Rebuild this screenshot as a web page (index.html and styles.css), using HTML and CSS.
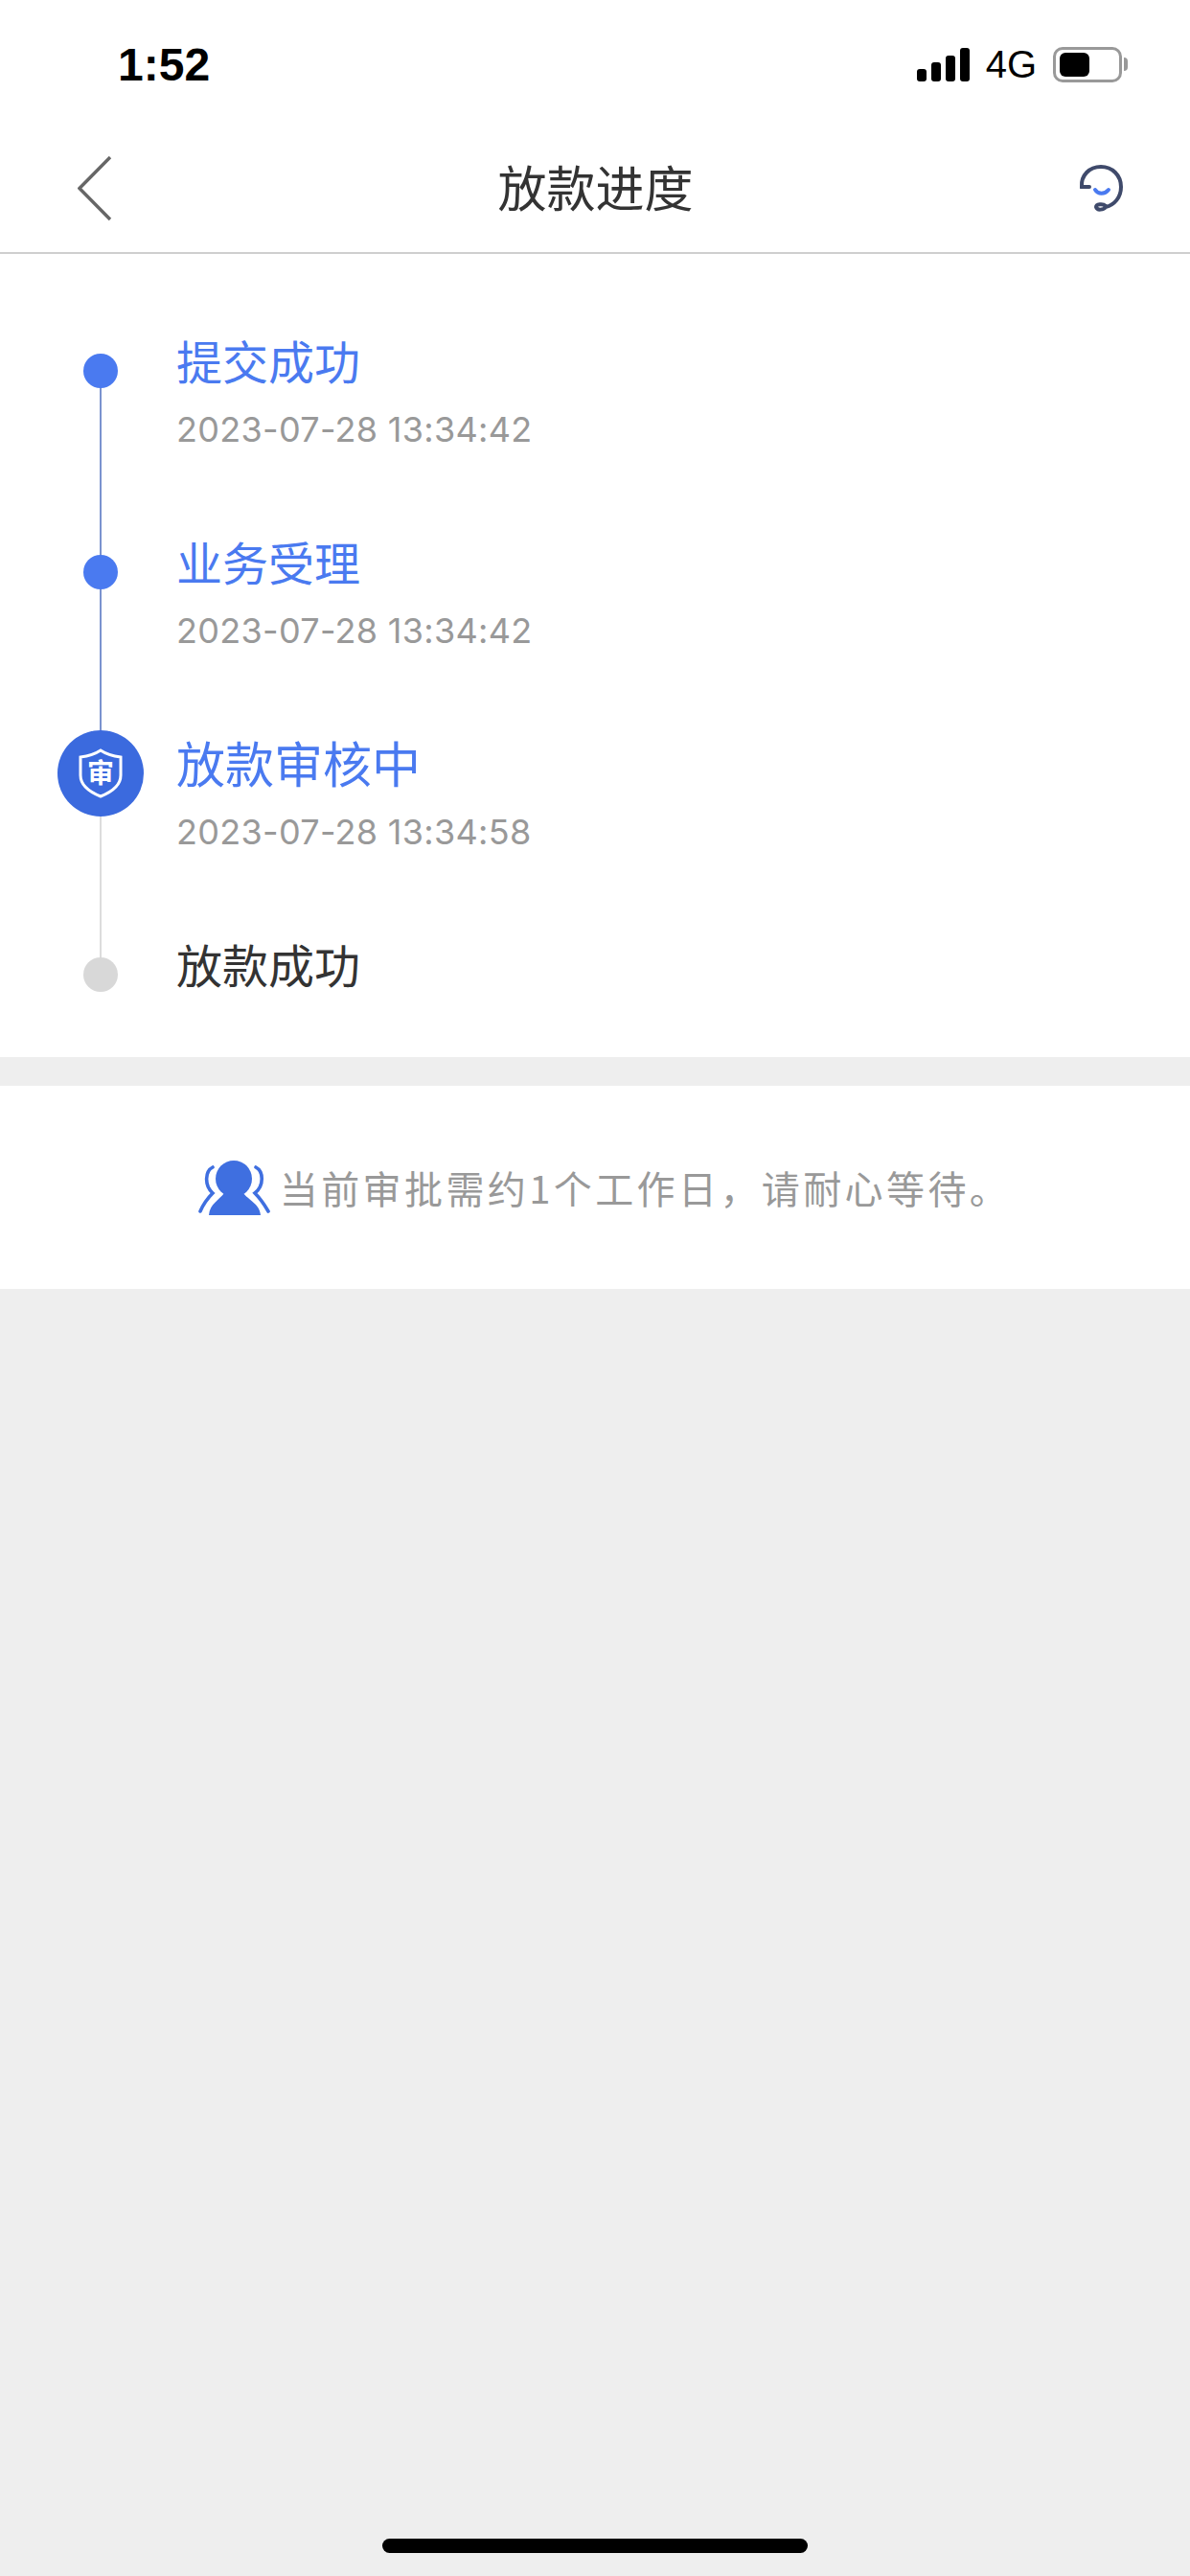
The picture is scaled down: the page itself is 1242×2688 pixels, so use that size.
FILE: index.html
```html
<!DOCTYPE html>
<html lang="zh-CN">

<head>
    <meta charset="utf-8" />
    <title>放款进度</title>
    <link rel="stylesheet" href="styles.css">
</head>

<body>
    <div class="status-bar">
        <span class="clock">1:52</span>
        <div class="status-right">
            <svg class="signal" width="55" height="35" viewBox="0 0 55 35" fill="#000">
                <rect x="0" y="22" width="10" height="13" rx="3" />
                <rect x="15" y="15" width="10" height="20" rx="3" />
                <rect x="30" y="8" width="10" height="27" rx="3" />
                <rect x="45" y="0" width="10" height="35" rx="3" />
            </svg>
            <span class="network">4G</span>
            <div class="battery">
                <div class="battery-level"></div>
            </div>
        </div>
    </div>

    <header class="nav">
        <svg width="36" height="68" viewBox="0 0 36 68" fill="none" stroke="#666" stroke-width="3.4">
            <polyline points="34,1 2,33.500 34,66" />
        </svg>
        <h1>放款进度</h1>
        <svg width="46" height="50" viewBox="0 0 46 50" fill="none" stroke="#3f4a6b" stroke-width="4"
            stroke-linecap="round">
            <path d="M11 23 L3 23 C2 11 11 2 23 2 C35 2 44 11 44 23 C44 34 37 42 28 44 C26 47 19 48 18 44 C18 41 25 40 28 43" />
            <path d="M17 26 C20 31 27 31 31 26" stroke="#4a7af0" />
        </svg>
    </header>

    <section class="timeline">
        <div class="step step-done">
            <div class="marker"><span class="dot"></span></div>
            <div class="step-body">
                <div class="step-title">提交成功</div>
                <div class="step-time">2023-07-28 13:34:42</div>
            </div>
        </div>
        <div class="step step-done">
            <div class="marker"><span class="dot"></span></div>
            <div class="step-body">
                <div class="step-title">业务受理</div>
                <div class="step-time">2023-07-28 13:34:42</div>
            </div>
        </div>
        <div class="step step-current">
            <div class="marker">
                <span class="badge">
                    <svg width="46" height="52" viewBox="0 0 46 52">
                        <path d="M23 2 C29 6 36 8 44 9 L44 28 C44 39 33 46 23 50 C13 46 2 39 2 28 L2 9 C10 8 17 6 23 2 Z"
                            fill="none" stroke="#fff" stroke-width="3" />
                        <text class="badge-text" x="23" y="36" text-anchor="middle">审</text>
                    </svg>
                </span>
            </div>
            <div class="step-body">
                <div class="step-title">放款审核中</div>
                <div class="step-time">2023-07-28 13:34:58</div>
            </div>
        </div>
        <div class="step step-todo">
            <div class="marker"><span class="dot"></span></div>
            <div class="step-body">
                <div class="step-title">放款成功</div>
            </div>
        </div>
    </section>

    <section class="notice">
        <svg width="75" height="58" viewBox="0 0 75 58" fill="none" stroke="#3f6fe0" stroke-width="3.6"
            stroke-linecap="round">
            <circle cx="37" cy="20" r="19" fill="#3f6fe0" stroke="none" />
            <path d="M11 58 C12 46 22 42 27 35 L47 35 C52 42 64 46 65 58 Z" fill="#3f6fe0" stroke="none" />
            <path d="M15 8 C7 12 6 27 15 35 C9 41 5 47 2 54" />
            <path d="M60 8 C68 12 69 27 59 35 C65 41 69 47 73 54" />
        </svg>
        <span class="notice-text">当前审批需约1个工作日&#xFF0C;请耐心等待。</span>
    </section>

    <div class="rest">
        <div class="home-indicator"></div>
    </div>
</body>

</html>
```

FILE: styles.css
```css
:root {
    --blue: #4a7af0;
    --blue-dark: #3b6ade;
    --grey-bg: #eeeeee;
    --grey-text: #999;
    --text: #333;
}

* {
    box-sizing: border-box;
}

html,
body {
    margin: 0;
    height: 2688px;
}

body {
    display: flex;
    flex-direction: column;
    background: var(--grey-bg);
    font-family: "Noto Sans CJK SC", "Noto Sans", sans-serif;
    overflow: hidden;
}

/* status bar */
.status-bar {
    height: 135px;
    padding: 0 71px 0 123px;
    display: flex;
    align-items: center;
    justify-content: space-between;
    background: #fff;
}

.clock {
    font-family: "Liberation Sans", sans-serif;
    font-weight: 700;
    font-size: 48px;
    color: #000;
}

.status-right {
    display: flex;
    align-items: center;
}

.network {
    margin: 0 17px;
    font-family: "Liberation Sans", sans-serif;
    font-size: 40px;
    color: #000;
}

.battery {
    position: relative;
    width: 72px;
    height: 37px;
    padding: 3px 4px;
    border: 3px solid #999;
    border-radius: 10px;
}

.battery::after {
    content: "";
    position: absolute;
    right: -9px;
    top: 8px;
    width: 4px;
    height: 14px;
    border-radius: 0 4px 4px 0;
    background: #999;
}

.battery-level {
    width: 31px;
    height: 25px;
    border-radius: 6px;
    background: #000;
}

/* nav */
.nav {
    height: 130px;
    padding: 0 70px 4px 81px;
    display: flex;
    align-items: center;
    justify-content: space-between;
    background: #fff;
    border-bottom: 2px solid #cfcfcf;
}

.nav h1 {
    margin: 0 0 6px;
    font-size: 51px;
    font-weight: 400;
    color: var(--text);
}

/* timeline */
.timeline {
    padding: 83px 0 65px;
    background: #fff;
}

.step {
    position: relative;
    display: flex;
    height: 210px;
    padding-left: 60px;
}

.step-todo {
    height: 60px;
}

.step::before {
    content: "";
    position: absolute;
    left: 104px;
    top: 39px;
    width: 2px;
    height: 210px;
    background: #7b93cf;
}

.step-current::before {
    background: #dcdcdc;
}

.step-todo::before {
    display: none;
}

.marker {
    position: relative;
    flex-shrink: 0;
    width: 90px;
    height: 78px;
    margin-right: 34px;
    display: flex;
    align-items: center;
    justify-content: center;
}

.dot {
    width: 36px;
    height: 36px;
    border-radius: 50%;
    background: var(--blue);
}

.step-todo .dot {
    background: #d8d8d8;
}

.badge {
    flex-shrink: 0;
    width: 90px;
    height: 90px;
    border-radius: 50%;
    background: var(--blue-dark);
    display: flex;
    align-items: center;
    justify-content: center;
}

.badge-text {
    font-size: 28px;
    font-weight: 700;
    fill: #fff;
}

.step-title {
    font-size: 48px;
    line-height: 54px;
    color: var(--blue);
}

.step-current .step-title {
    font-size: 51px;
}

.step-todo .step-title {
    color: var(--text);
}

.step-time {
    margin-top: 24px;
    font-family: "Inter", sans-serif;
    font-size: 36px;
    line-height: 44px;
    letter-spacing: 0.3px;
    color: var(--grey-text);
}

/* notice */
.notice {
    height: 212px;
    margin-top: 30px;
    padding-left: 20px;
    display: flex;
    align-items: center;
    justify-content: center;
    gap: 10px;
    background: #fff;
}

.notice-text {
    font-size: 40px;
    letter-spacing: 3.4px;
    color: var(--grey-text);
}

/* grey area */
.rest {
    flex: 1;
    display: flex;
    align-items: flex-end;
    justify-content: center;
    padding-bottom: 24px;
}

.home-indicator {
    width: 444px;
    height: 15px;
    border-radius: 8px;
    background: #000;
}
```
